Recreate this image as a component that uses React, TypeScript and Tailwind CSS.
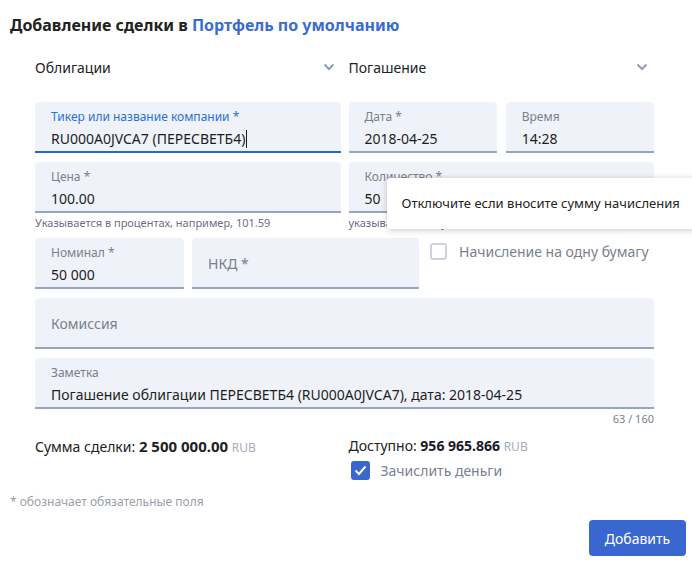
import React from 'react';

function Chevron() {
  return (
    <svg width="12" height="8" viewBox="0 0 12 8" fill="none">
      <path d="M1.5 1.5 L6 6 L10.5 1.5" stroke="#8f9cbd" strokeWidth="2" />
    </svg>
  );
}

function Select({ value }: { value: string }) {
  return (
    <div className="flex h-[20px] items-center justify-between">
      <span className="text-[14px] text-[#222]">{value}</span>
      <span className="mr-[6px] flex items-center">
        <Chevron />
      </span>
    </div>
  );
}

function Field({
  label,
  value,
  focused,
  className = '',
  children,
}: {
  label: string;
  value?: string;
  focused?: boolean;
  className?: string;
  children?: React.ReactNode;
}) {
  return (
    <div
      className={`relative h-[51px] rounded-t-[4px] bg-[#eff2f9] px-4 ${
        focused ? 'border-b-2 border-[#1f6bd1]' : 'border-b-2 border-[#98a5c2]'
      } ${className}`}
    >
      {value !== undefined ? (
        <div className="flex flex-col pt-[7px]">
          <span className={`text-[12px] leading-4 ${focused ? 'text-[#2a71d6]' : 'text-[#7a7f8c]'}`}>{label}</span>
          <span className="mt-[4px] flex items-center text-[14px] leading-5 text-[#1e1e1e]">
            {value}
            {focused && <span className="ml-px inline-block h-[18px] w-px bg-[#1a1a1a]" />}
          </span>
        </div>
      ) : (
        <div className="flex h-full items-center pt-[1px] text-[14px] text-[#7a7f8c]">{label}</div>
      )}
      {children}
    </div>
  );
}

export default function App() {
  return (
    <div
      className="h-[562px] w-[692px] overflow-hidden bg-white"
      style={{ fontFamily: '"Noto Sans", "Open Sans", sans-serif' }}
    >
      <div className="px-[10px] pt-[14px]">
        <h1 className="text-[16px] font-bold leading-[22px] text-[#222]">
          Добавление сделки в <span className="text-[#3a6bd3]">Портфель по умолчанию</span>
        </h1>
      </div>

      <div className="ml-[35px] w-[619px]">
        <div className="mt-[21px] grid grid-cols-2 gap-x-2">
          <Select value="Облигации" />
          <Select value="Погашение" />
        </div>

        <div className="mt-[25px] grid grid-cols-2 gap-x-2">
          <Field label="Тикер или название компании *" value="RU000A0JVCA7 (ПЕРЕСВЕТБ4)" focused />
          <div className="grid grid-cols-2 gap-x-[9px]">
            <Field label="Дата *" value="2018-04-25" />
            <Field label="Время" value="14:28" />
          </div>
        </div>

        <div className="mt-[9px] grid grid-cols-2 gap-x-2">
          <div>
            <Field label="Цена *" value="100.00" />
            <div className="mt-[2px] text-[11px] leading-4 text-[#6b7080]">Указывается в процентах, например, 101.59</div>
          </div>
          <div className="relative">
            <Field label="Количество *" value="50" />
            <div className="mt-[2px] text-[11px] leading-4 text-[#6b7080]">указывается в штуках</div>
            <div className="absolute left-[38px] top-[16px] flex h-[51px] w-[320px] items-center rounded-[3px] bg-white pl-[15px] text-[13px] text-[#222] shadow-[0_1px_6px_rgba(0,0,0,0.22)]">
              Отключите если вносите сумму начисления
            </div>
          </div>
        </div>

        <div className="mt-[7px] flex items-start gap-x-2">
          <Field label="Номинал *" value="50 000" className="w-[149px]" />
          <Field label="НКД *" className="w-[227px]" />
          <label className="ml-[3px] mt-[3px] flex items-center gap-[12px]">
            <span className="h-[17px] w-[17px] rounded-[3px] border-2 border-[#cdd2dd]" />
            <span className="text-[14px] text-[#7b8090]">Начисление на одну бумагу</span>
          </label>
        </div>

        <div className="mt-[9px]">
          <Field label="Комиссия" />
        </div>

        <div className="mt-[9px]">
          <Field label="Заметка" value="Погашение облигации ПЕРЕСВЕТБ4 (RU000A0JVCA7), дата: 2018-04-25" />
          <div className="mt-[2px] text-right text-[11px] leading-4 text-[#7a7f8c]">63 / 160</div>
        </div>

        <div className="mt-[8px] grid grid-cols-2 gap-x-2">
          <div className="text-[14px] text-[#222]">
            Сумма сделки: <span className="text-[15px] font-bold">2 500 000.00</span>{' '}
            <span className="text-[12px] text-[#a8acb8]">RUB</span>
          </div>
          <div>
            <div className="text-[14px] text-[#222]">
              Доступно: <span className="font-bold text-[#1a1a2e]">956 965.866</span>{' '}
              <span className="text-[12px] text-[#a8acb8]">RUB</span>
            </div>
            <label className="mt-[4px] ml-[2px] flex items-center gap-[11px]">
              <span className="flex h-[19px] w-[19px] items-center justify-center rounded-[3px] bg-[#3a66d0]">
                <svg width="13" height="11" viewBox="0 0 13 11" fill="none">
                  <path d="M1.5 5.5 L5 9 L11.5 1.5" stroke="white" strokeWidth="2" />
                </svg>
              </span>
              <span className="text-[14px] text-[#7b8090]">Зачислить деньги</span>
            </label>
          </div>
        </div>
      </div>

      <div className="mt-[12px] px-[10px] text-[12px] text-[#9a9eaa]">* обозначает обязательные поля</div>

      <div className="mt-[9px] flex justify-end pr-[6px]">
        <button className="h-[36px] w-[97px] rounded-[4px] bg-[#3a66d0] text-[14px] text-white">Добавить</button>
      </div>
    </div>
  );
}
